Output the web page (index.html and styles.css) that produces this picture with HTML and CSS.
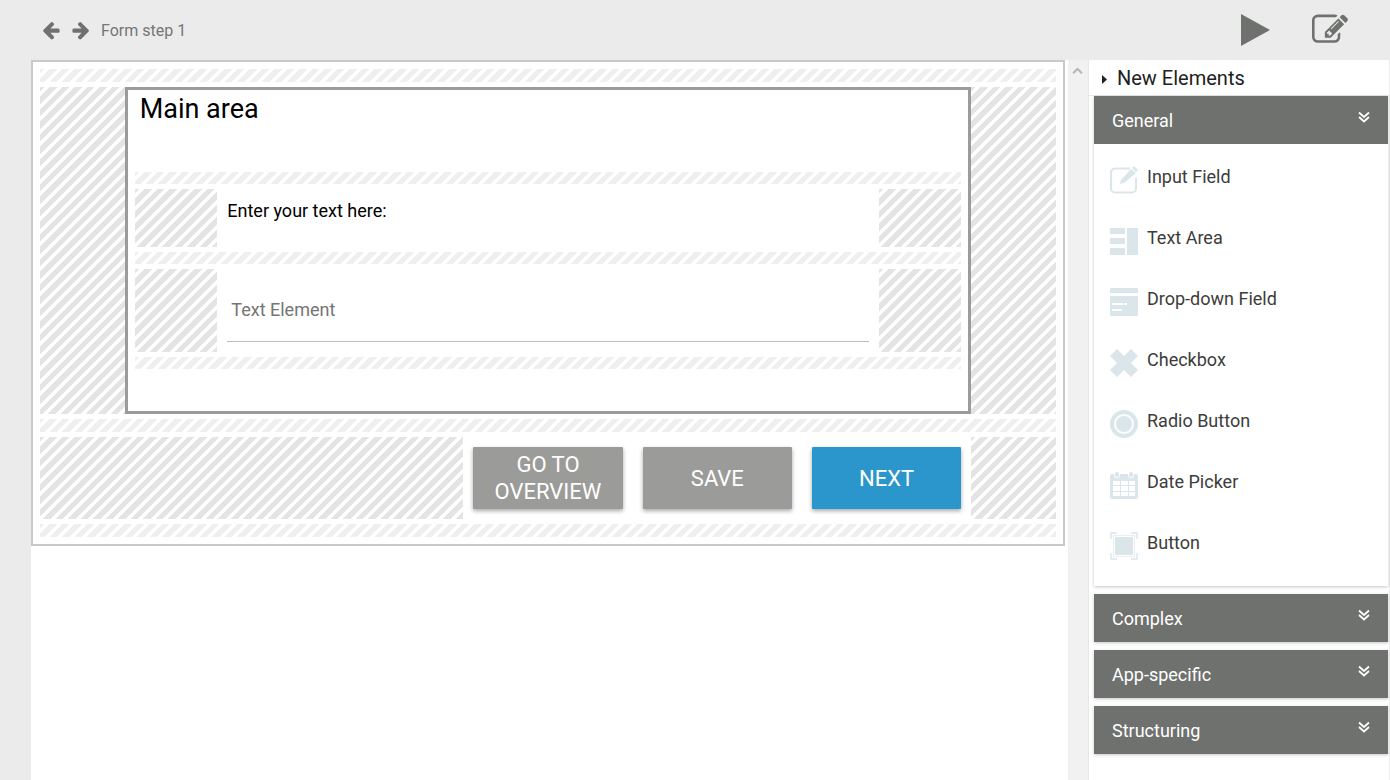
FILE: index.html
```html
<!DOCTYPE html>
<html lang="en">
<head>
<meta charset="utf-8">
<title>Form step 1</title>
<link rel="stylesheet" href="styles.css">
</head>
<body>
<svg class="defs" aria-hidden="true">
  <symbol id="arrow" viewBox="0 0 1792 1792"><path d="M1664 896v128q0 53-32.500 90.500t-84.500 37.500h-704l293 294q38 36 38 90t-38 90l-75 76q-37 37-90 37-52 0-91-37l-651-652q-37-37-37-90 0-52 37-91l651-650q38-38 91-38 52 0 90 38l75 74q38 38 38 91t-38 91l-293 293h704q52 0 84.500 37.500t32.500 90.500z"/></symbol>
  <symbol id="edit" viewBox="0 0 1792 1792"><path d="M888 1184l116-116-152-152-116 116v56h96v96h56zm440-720q-16-16-33 1l-350 350q-17 17-1 33t33-1l350-350q17-17 1-33zm80 594v190q0 119-84.500 203.500t-203.500 84.500h-832q-119 0-203.500-84.500t-84.500-203.500v-832q0-119 84.500-203.500t203.500-84.500h832q63 0 117 25 15 7 18 23 3 17-9 29l-49 49q-14 14-32 8-23-6-45-6h-832q-66 0-113 47t-47 113v832q0 66 47 113t113 47h832q66 0 113-47t47-113v-126q0-13 9-22l64-64q15-15 35-7t20 29zm-96-738l288 288-672 672h-288v-288zm444 132l-92 92-288-288 92-92q28-28 68-28t68 28l152 152q28 28 28 68t-28 68z"/></symbol>
  <symbol id="chevrons" viewBox="0 0 12 12"><path d="M1 1.500l5 4.500 5-4.500M1 6l5 4.500L11 6" fill="none" stroke="currentColor" stroke-width="1.700"/></symbol>
</svg>

<header class="toolbar">
  <nav class="steps">
    <button class="icon-button" aria-label="Previous step"><svg class="arrow"><use href="#arrow"/></svg></button>
    <button class="icon-button" aria-label="Next step"><svg class="arrow arrow-next"><use href="#arrow"/></svg></button>
    <span class="step-name">Form step 1</span>
  </nav>
  <div class="actions">
    <button class="icon-button" aria-label="Preview"><svg class="play" viewBox="0 0 30 32"><path d="M1 0l29 16L1 32z"/></svg></button>
    <button class="icon-button" aria-label="Edit"><svg class="edit"><use href="#edit"/></svg></button>
  </div>
</header>

<div class="workspace">
  <main class="canvas">
    <form class="form">
      <div class="strip strip-outer"></div>
      <div class="row row-main">
        <div class="blank"></div>
        <section class="area">
          <h1 class="area-title">Main area</h1>
          <div class="strip"></div>
          <div class="row row-field">
            <div class="blank"></div>
            <label class="prompt" for="text-element">Enter your text here:</label>
            <div class="blank"></div>
          </div>
          <div class="strip"></div>
          <div class="row row-field">
            <div class="blank"></div>
            <div class="field"><input class="input" id="text-element" type="text" placeholder="Text Element"></div>
            <div class="blank"></div>
          </div>
          <div class="strip"></div>
        </section>
        <div class="blank"></div>
      </div>
      <div class="strip strip-outer"></div>
      <div class="row row-buttons">
        <div class="blank"></div>
        <div class="cell"><button class="button" type="button">GO TO OVERVIEW</button></div>
        <div class="cell"><button class="button" type="button">SAVE</button></div>
        <div class="cell"><button class="button button-primary" type="button">NEXT</button></div>
        <div class="blank"></div>
      </div>
      <div class="strip strip-outer"></div>
    </form>
  </main>
  <div class="scroll-track"><svg class="scroll-arrow" viewBox="0 0 10 8"><path d="M1 6.500l4-4 4 4" fill="none" stroke="currentColor" stroke-width="1.800"/></svg></div>
  <aside class="panel">
    <h2 class="panel-title"><svg class="caret" viewBox="0 0 5 9"><path d="M0 0l5 4.500L0 9z"/></svg>New Elements</h2>
    <div class="accordion">
      <section class="group">
        <button class="group-head">General<svg class="chevrons"><use href="#chevrons"/></svg></button>
        <ul class="elements">
          <li class="element"><svg class="element-icon" viewBox="0 0 28 28"><path d="M20 2.500H5A4 4 0 0 0 1 6.500V22.500a4 4 0 0 0 4 4H22a4 4 0 0 0 4-4V12" fill="none" stroke="currentColor" stroke-width="2"/><path d="M10 18l1-4L21 3l5 4L14 17zM22 2l2-2 4 4-2 2z"/></svg>Input Field</li>
          <li class="element"><svg class="element-icon" viewBox="0 0 28 28"><path d="M0 1h15v6H0zM0 11h15v6H0zM0 21h15v7H0zM17 1h11v27H17z"/></svg>Text Area</li>
          <li class="element"><svg class="element-icon" viewBox="0 0 28 28"><path fill-rule="evenodd" d="M1 0h26q1 0 1 1v4H0V1q0-1 1-1zM0 8h28v19q0 1-1 1H1q-1 0-1-1zM2 15v2h11v-2zM14 15v2h3v-2zM2 21v2h10v-2z"/></svg>Drop-down Field</li>
          <li class="element"><svg class="element-icon" viewBox="0 0 28 28"><path d="M7 0l7 7 7-7 7 7-7 7 7 7-7 7-7-7-7 7-7-7 7-7-7-7z"/></svg>Checkbox</li>
          <li class="element"><svg class="element-icon" viewBox="0 0 28 28"><circle cx="14" cy="14" r="12" fill="none" stroke="currentColor" stroke-width="4"/><circle cx="14" cy="14" r="8"/></svg>Radio Button</li>
          <li class="element"><svg class="element-icon" viewBox="0 0 28 28"><path fill-rule="evenodd" d="M0 5q0-2 2-2h2q0 4 3 4t3-4h8q0 4 3 4t3-4h2q2 0 2 2v21q0 2-2 2H2q-2 0-2-2zM3 10v4h7v-4zM11 10v4h7v-4zM19 10v4h6v-4zM3 15v5h7v-5zM11 15v5h7v-5zM19 15v5h6v-5zM3 21v4h7v-4zM11 21v4h7v-4zM19 21v4h6v-4z"/><rect x="5" y="1" width="4" height="5" rx="2"/><rect x="19" y="1" width="4" height="5" rx="2"/></svg>Date Picker</li>
          <li class="element"><svg class="element-icon" viewBox="0 0 28 28"><path d="M5 5h18v18H5z"/><path d="M3.500 3.500h21v21h-21z" fill="none" stroke="currentColor" stroke-width=".6"/><path d="M1 7V1h6M21 1h6v6M27 21v6h-6M7 27H1v-6" fill="none" stroke="currentColor" stroke-width="1.400"/></svg>Button</li>
        </ul>
      </section>
      <section class="group"><button class="group-head">Complex<svg class="chevrons"><use href="#chevrons"/></svg></button></section>
      <section class="group"><button class="group-head">App-specific<svg class="chevrons"><use href="#chevrons"/></svg></button></section>
      <section class="group"><button class="group-head">Structuring<svg class="chevrons"><use href="#chevrons"/></svg></button></section>
    </div>
  </aside>
</div>
</body>
</html>
```
FILE: styles.css
```css
* {
  box-sizing: border-box;
}

body {
  margin: 0;
  min-height: 100vh;
  display: flex;
  flex-direction: column;
  background: #ebebeb;
  color: #000;
  font-family: Roboto, sans-serif;
  font-size: 18px;
  line-height: 24px;
}

button,
input {
  font: inherit;
}

button {
  border: 0;
  cursor: pointer;
}

svg {
  display: block;
  flex: none;
  fill: currentColor;
}

.defs {
  display: none;
}

/* Toolbar */

.toolbar {
  display: flex;
  justify-content: space-between;
  align-items: center;
  height: 60px;
  padding: 0 42px 0 41px;
  color: #6f716e;
}

.steps,
.actions {
  display: flex;
  align-items: center;
}

.steps {
  gap: 10px;
}

.actions {
  gap: 42px;
}

.icon-button {
  padding: 0;
  background: none;
  color: inherit;
}

.arrow {
  width: 20px;
  height: 20px;
}

.arrow-next {
  transform: scaleX(-1);
}

.step-name {
  padding-top: 2px;
  color: #757575;
  font-size: 16px;
}

.play {
  width: 30px;
  height: 32px;
}

.edit {
  width: 36px;
  height: 36px;
}

/* Workspace */

.workspace {
  flex: 1;
  display: flex;
  padding: 0 1px 0 31px;
}

.canvas {
  flex: 1;
  min-width: 0;
  padding-right: 3px;
  background: #fff;
}

.form {
  display: flex;
  flex-direction: column;
  gap: 5px;
  padding: 7px;
  border: 2px solid #c9c9c9;
}

.blank,
.strip {
  --stripe: #e4e4e4;
  background: repeating-linear-gradient(135deg, var(--stripe) 0 10%, #fff 10% 20%, var(--stripe) 20% 25%) 0 0 / 25px 25px;
}

.strip {
  --stripe: #efefef;
  height: 12px;
}

.strip-outer {
  height: 13px;
}

.row {
  display: grid;
}

.row-main {
  grid-template-columns: 1fr 10fr 1fr;
}

.row-field {
  grid-template-columns: 1fr 8fr 1fr;
}

.row-buttons {
  grid-template-columns: 5fr 2fr 2fr 2fr 1fr;
}

.area {
  display: flex;
  flex-direction: column;
  gap: 5px;
  padding: 0 7px 42px;
  border: 3px solid #9b9b99;
}

.area-title {
  margin: 0 0 40px;
  padding: 2px 5px 0;
  font-size: 27px;
  font-weight: 400;
  line-height: 35px;
}

.prompt {
  padding: 10px 10px 24px;
}

.field {
  padding: 10px;
}

.input {
  display: block;
  width: 100%;
  height: 63px;
  padding: 0 4px 2px;
  border: 0;
  border-bottom: 1px solid #bcbcbc;
  outline: 0;
  background: none;
}

.input::placeholder {
  color: #757575;
  opacity: 1;
}

.cell {
  padding: 10px;
}

.button {
  width: 100%;
  height: 62px;
  padding: 4px 16px;
  border-radius: 1px;
  background: #9b9b99;
  box-shadow: 0 2px 4px rgba(0, 0, 0, .35);
  color: #fff;
  font-size: 22px;
  line-height: 27px;
}

.button-primary {
  background: #2a96cc;
}

/* Scrollbar */

.scroll-track {
  width: 20px;
  padding: 6px 4px;
  background: #f1f1f1;
  color: #b4b4b4;
}

.scroll-arrow {
  width: 11px;
  height: 9px;
}

/* Element palette */

.panel {
  flex: none;
  width: 301px;
  border-left: 1px solid #e8e8e8;
  background: #fff;
}

.panel-title {
  display: flex;
  align-items: center;
  gap: 10px;
  height: 36px;
  margin: 0;
  padding-left: 13px;
  border-bottom: 1px solid #e8e8e8;
  color: #212121;
  font-size: 20px;
  font-weight: 400;
}

.caret {
  width: 5px;
  height: 9px;
  margin-top: 4px;
}

.accordion {
  display: flex;
  flex-direction: column;
  gap: 8px;
  padding: 0 1px 0 5px;
}

.group {
  box-shadow: 0 1px 3px rgba(0, 0, 0, .22);
}

.group-head {
  display: flex;
  justify-content: space-between;
  align-items: center;
  width: 100%;
  height: 48px;
  padding: 1px 18px 0;
  background: #6f716e;
  color: #fff;
  text-align: left;
}

.chevrons {
  width: 12px;
  height: 12px;
  margin-bottom: 7px;
}

.elements {
  margin: 0;
  padding: 3px 16px 12px;
  list-style: none;
}

.element {
  display: flex;
  align-items: center;
  gap: 9px;
  height: 61px;
  padding-bottom: 1px;
  color: #3c3c3b;
}

.element-icon {
  width: 28px;
  height: 28px;
  margin-top: 6px;
  color: #dbe6ea;
}
```
